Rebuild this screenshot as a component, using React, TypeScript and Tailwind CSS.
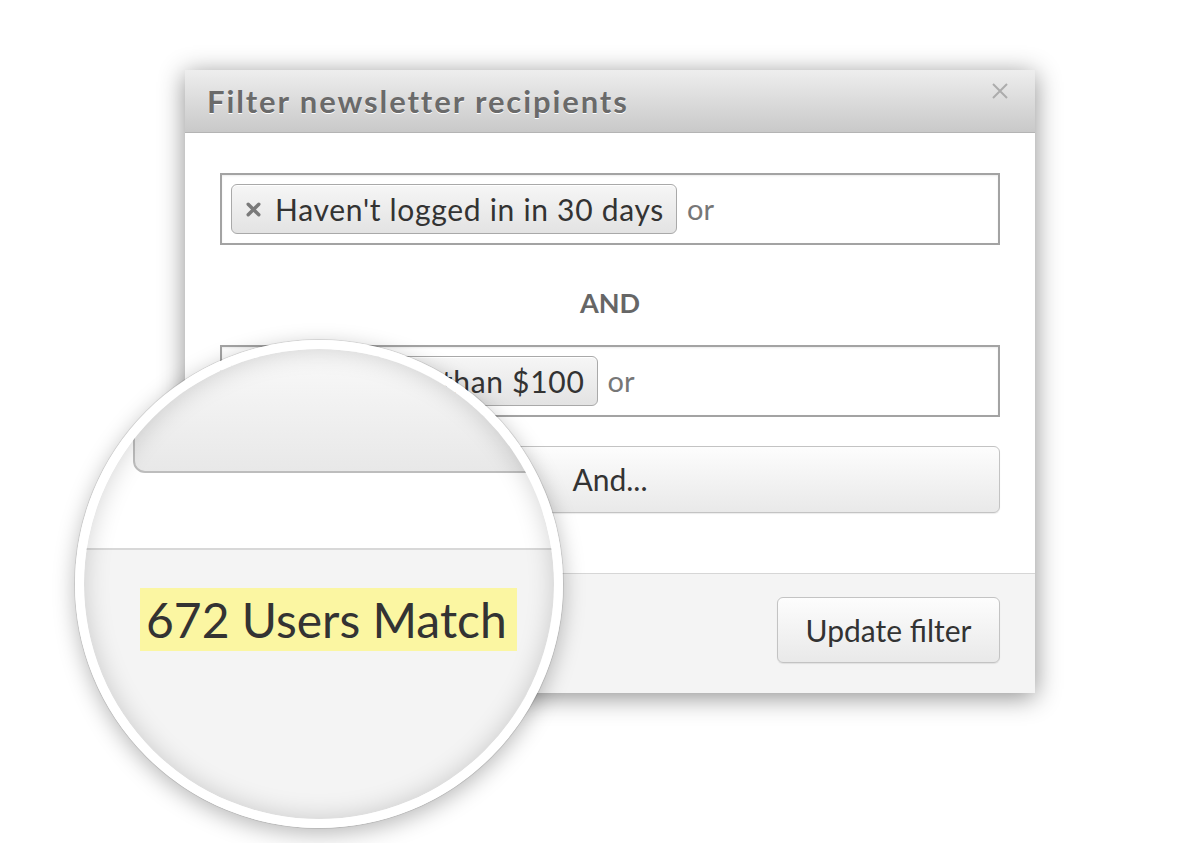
import { ReactNode } from "react";

const font = { fontFamily: "Lato, 'Open Sans', 'Liberation Sans', sans-serif" };

function TagX() {
  return (
    <svg width="17" height="17" viewBox="0 0 16 16" className="shrink-0">
      <path d="M3 3 L13 13 M13 3 L3 13" stroke="#7a7a7a" strokeWidth="3.2" strokeLinecap="round" />
    </svg>
  );
}

function Tag({ children }: { children: ReactNode }) {
  return (
    <div className="flex h-[50px] items-center gap-[13px] rounded-[6px] border border-[#a9a9a9] bg-gradient-to-b from-[#f6f6f6] to-[#e3e3e3] pl-[13px] pr-[12px] text-[30px] tracking-[0.7px] text-[#333] shadow-[inset_0_1px_0_#fff]">
      <TagX />
      <span className="leading-none">{children}</span>
    </div>
  );
}

function FilterBox({ tag }: { tag: string }) {
  return (
    <div className="flex h-[72px] items-center gap-[10px] border-2 border-[#a3a3a3] bg-white pl-[9px] shadow-[inset_0_1px_2px_rgba(0,0,0,0.08)]">
      <Tag>{tag}</Tag>
      <span className="text-[29px] text-[#777]">or</span>
    </div>
  );
}

function Magnifier() {
  return (
    <div className="absolute left-[75px] top-[340px] h-[488px] w-[488px] overflow-hidden rounded-full border-[9px] border-white shadow-[0_6px_22px_rgba(0,0,0,0.28),0_0_0_1px_rgba(0,0,0,0.1)]">
      <div className="flex h-full w-full flex-col bg-white">
        <div className="ml-[49px] mt-[-12px] h-[136px] w-[620px] shrink-0 rounded-[12px] border-2 border-[#bdbdbd] bg-gradient-to-b from-[#fbfbfb] to-[#e8e8e8]" />
        <div className="h-[75px] shrink-0 bg-white" />
        <div className="flex-1 border-t-2 border-[#d8d8d8] bg-[#f4f4f4] pl-[56px] pt-[38px]">
          <span className="inline-block bg-[#fbf6a2] pl-[6px] pr-[10px] text-[48px] leading-[63px] text-[#333]">
            672 Users Match
          </span>
        </div>
      </div>
      <div className="pointer-events-none absolute inset-0 rounded-full shadow-[inset_0_0_26px_rgba(0,0,0,0.18)]" />
    </div>
  );
}

export default function App() {
  return (
    <div className="relative h-[843px] w-[1200px] overflow-hidden bg-white" style={font}>
      <div className="ml-[185px] pt-[70px]">
        <div className="w-[850px] shadow-[0_4px_24px_rgba(0,0,0,0.45)]">
          {/* header */}
          <div className="flex h-[63px] items-center justify-between border-b border-[#b4b4b4] bg-gradient-to-b from-[#eeeeee] to-[#c9c9c9] pl-[22px] pr-[27px]">
            <h1 className="text-[31px] font-bold tracking-[1.9px] text-[#6a6a6a] [text-shadow:0_1px_0_#fff]">
              Filter newsletter recipients
            </h1>
            <svg width="16" height="16" viewBox="0 0 16 16" className="-mt-[21px]">
              <path d="M1 1 L15 15 M15 1 L1 15" stroke="#acacac" strokeWidth="2" />
            </svg>
          </div>

          {/* body */}
          <div className="bg-white px-[35px] pb-[60px] pt-[40px]">
            <FilterBox tag="Haven't logged in in 30 days" />
            <div className="flex h-[100px] items-center justify-center pt-[16px] text-[27px] font-bold text-[#666]">
              AND
            </div>
            <FilterBox tag="Spent more than $100" />
            <button className="mt-[29px] flex h-[67px] w-full items-center justify-center rounded-[6px] border border-[#c3c3c3] bg-gradient-to-b from-[#fdfdfd] to-[#e9e9e9] text-[30px] text-[#333] shadow-[0_1px_1px_rgba(0,0,0,0.08)]">
              And...
            </button>
          </div>

          {/* footer */}
          <div className="flex h-[120px] justify-end border-t border-[#d6d6d6] bg-[#f4f4f4] pr-[35px] pt-[23px]">
            <button className="h-[66px] w-[223px] rounded-[6px] border border-[#c3c3c3] bg-gradient-to-b from-[#fdfdfd] to-[#e9e9e9] text-[30px] text-[#333] shadow-[0_1px_1px_rgba(0,0,0,0.08)]">
              Update filter
            </button>
          </div>
        </div>
      </div>
      <Magnifier />
    </div>
  );
}
